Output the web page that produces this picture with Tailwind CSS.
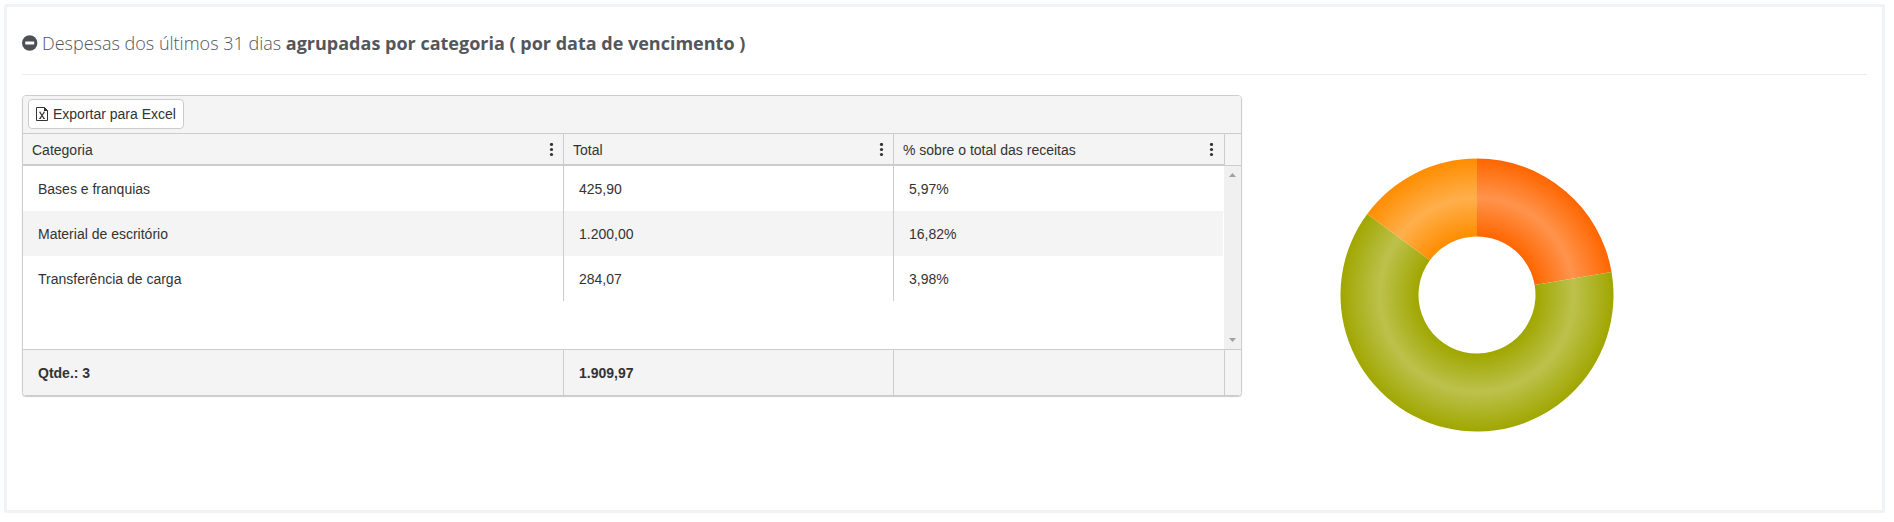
<!DOCTYPE html>
<html lang="pt-BR">
<head>
<meta charset="utf-8">
<title>Despesas por categoria</title>
<script src="https://cdn.jsdelivr.net/npm/@tailwindcss/browser@4"></script>
</head>
<body class="bg-white pt-1 pl-1 pr-[9px] pb-[9px] font-['Liberation_Sans',Arial,sans-serif] text-sm text-[#333]">
<section class="rounded-xs border-3 border-[#f1f2f4] p-[15px]">
  <h2 class="flex items-center gap-1 border-b border-[#eaebec] pt-1.5 pb-4 font-['Open_Sans',sans-serif] text-lg leading-[30px] font-light text-[#53565c]">
    <button type="button" aria-label="Recolher" class="size-4">
      <svg viewBox="0 0 16 16" class="size-4"><circle cx="7.7" cy="8" r="7.7" fill="#4d5157"/><rect x="3.2" y="6.4" width="9" height="3" rx=".6" fill="#fff"/></svg>
    </button>
    <span>Despesas dos últimos 31 dias <strong class="font-bold">agrupadas por categoria ( por data de vencimento )</strong></span>
  </h2>
  <div class="mt-5 flex items-start">
    <div class="w-[66.125%] overflow-hidden rounded-sm border border-[#ccc] shadow-[0_1px_1px_#cccccc]">
      <div class="border-b border-[#ccc] bg-[#f4f4f4] pt-[3px] pb-1 pl-[5px]">
        <button type="button" class="flex h-[30px] items-center gap-[5px] rounded-sm border border-[#ccc] bg-white px-[7px]">
          <svg viewBox="0 0 12 14" class="h-[14px] w-3" fill="none" stroke="#333"><path d="M.5.5h8l3 3v10H.5z"/><path d="M8 0l4 4H8z" fill="#333" stroke="none"/><path d="M4 5.5l4 6M8 5.5l-4 6" stroke-width="1.3"/><path d="M3 5.2h2M7 5.2h2M3 11.5h2M7 11.5h2" stroke-width=".8"/></svg>
          Exportar para Excel
        </button>
      </div>
      <table class="w-full table-fixed border-separate border-spacing-0 text-left">
        <colgroup><col class="w-[44.335%]"><col class="w-[27.093%]"><col><col class="w-[17px]"></colgroup>
        <thead class="bg-[#f4f4f4]">
          <tr class="h-8">
            <th class="border-b-2 border-[#ccc] pt-0.5 pr-2 pl-[9px] font-normal"><div class="flex items-center justify-between">Categoria <button type="button" aria-label="Menu da coluna Categoria"><svg viewBox="0 0 7 14" class="block h-[14px] w-[7px]" fill="#333"><circle cx="3.5" cy="1.5" r="1.6"/><circle cx="3.5" cy="6.5" r="1.6"/><circle cx="3.5" cy="11.5" r="1.6"/></svg></button></div></th>
            <th class="border-b-2 border-l border-[#ccc] pt-0.5 pr-2 pl-[9px] font-normal"><div class="flex items-center justify-between">Total <button type="button" aria-label="Menu da coluna Total"><svg viewBox="0 0 7 14" class="block h-[14px] w-[7px]" fill="#333"><circle cx="3.5" cy="1.5" r="1.6"/><circle cx="3.5" cy="6.5" r="1.6"/><circle cx="3.5" cy="11.5" r="1.6"/></svg></button></div></th>
            <th class="border-b-2 border-l border-[#ccc] pt-0.5 pr-[9px] pl-[9px] font-normal"><div class="flex items-center justify-between">% sobre o total das receitas <button type="button" aria-label="Menu da coluna percentual"><svg viewBox="0 0 7 14" class="block h-[14px] w-[7px]" fill="#333"><circle cx="3.5" cy="1.5" r="1.6"/><circle cx="3.5" cy="6.5" r="1.6"/><circle cx="3.5" cy="11.5" r="1.6"/></svg></button></div></th>
            <td class="border-b border-l border-[#ccc]"></td>
          </tr>
        </thead>
        <tbody>
          <tr class="h-[45px]">
            <td class="pl-[15px]">Bases e franquias</td><td class="border-l border-[#ccc] pl-[15px]">425,90</td><td class="border-l border-[#ccc] pl-[15px]">5,97%</td>
            <td rowspan="4" class="bg-[#f0f0f0] p-0">
              <div class="flex h-[183px] flex-col items-center justify-between py-[7px]">
                <svg viewBox="0 0 7 4" class="h-1 w-[7px]" fill="#a0a0a0"><path d="M0 4L3.5 0 7 4z"/></svg>
                <svg viewBox="0 0 7 4" class="h-1 w-[7px]" fill="#a0a0a0"><path d="M0 0h7L3.5 4z"/></svg>
              </div>
            </td>
          </tr>
          <tr class="h-[45px] bg-[#f4f4f4]"><td class="pl-[15px]">Material de escritório</td><td class="border-l border-[#ccc] pl-[15px]">1.200,00</td><td class="border-r border-l border-r-white border-l-[#ccc] pl-[15px]">16,82%</td></tr>
          <tr class="h-[45px]"><td class="pl-[15px]">Transferência de carga</td><td class="border-l border-[#ccc] pl-[15px]">284,07</td><td class="border-l border-[#ccc] pl-[15px]">3,98%</td></tr>
          <tr class="h-12"><td colspan="3"></td></tr>
        </tbody>
        <tfoot class="bg-[#f4f4f4] font-bold">
          <tr class="h-[46px]"><td class="border-t border-[#ccc] pl-[15px]">Qtde.: 3</td><td class="border-t border-l border-[#ccc] pl-[15px]">1.909,97</td><td class="border-t border-l border-[#ccc]"></td><td class="border-t border-l border-[#ccc]"></td></tr>
        </tfoot>
      </table>
    </div>
    <svg role="img" aria-label="Despesas por categoria" viewBox="-205 -200 410 400" class="ml-[30px] h-[400px] w-[410px]">
      <defs>
        <radialGradient id="shine" gradientUnits="userSpaceOnUse" cx="0" cy="0" r="136.5">
          <stop offset=".43" stop-color="#fff" stop-opacity="0"/><stop offset=".71" stop-color="#fff" stop-opacity=".3"/><stop offset="1" stop-color="#fff" stop-opacity="0"/>
        </radialGradient>
      </defs>
      <path fill="#ff6600" d="M0-136.5A136.5 136.5 0 0 1 134.54-23.05L57.66-9.88A58.5 58.5 0 0 0 0-58.5z"/>
      <path fill="#a0a700" d="M134.54-23.05A136.5 136.5 0 1 1-109.78-81.12L-47.05-34.77A58.5 58.5 0 1 0 57.66-9.88z"/>
      <path fill="#ff8d00" d="M-109.78-81.12A136.5 136.5 0 0 1 0-136.5V-58.5A58.5 58.5 0 0 0-47.05-34.77z"/>
      <circle r="97.5" fill="none" stroke="url(#shine)" stroke-width="78"/>
    </svg>
  </div>
</section>
</body>
</html>
